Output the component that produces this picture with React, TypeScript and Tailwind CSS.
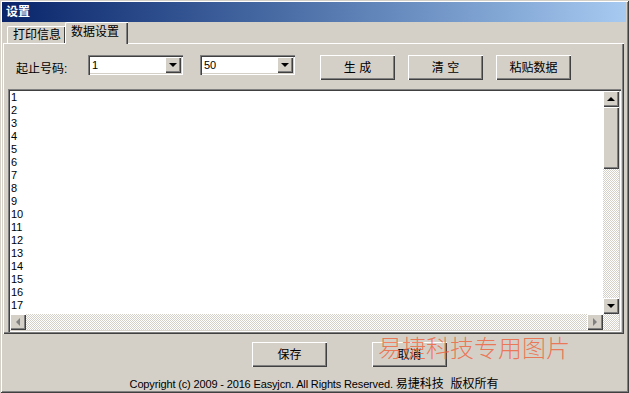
import React from 'react';

const RAISED = 'shadow-[inset_1px_1px_0_#ffffff,inset_-1px_-1px_0_#404040,inset_-2px_-2px_0_#808080]';
const SUNKEN = 'shadow-[inset_1px_1px_0_#808080,inset_2px_2px_0_#404040,inset_-1px_-1px_0_#ffffff,inset_-2px_-2px_0_#d4d0c8]';
const CHECKER = 'bg-[repeating-conic-gradient(#ffffff_0%_25%,#d4d0c8_0%_50%)] bg-size-[2px_2px]';

const LINES = Array.from({ length: 17 }, (_, i) => String(i + 1));

function Arrow({ dir, disabled }: { dir: 'up' | 'down' | 'left' | 'right'; disabled?: boolean }) {
  if (dir === 'up') return <div className={`w-0 h-0 border-x-[4px] border-x-transparent border-b-[4px] ${disabled ? 'border-b-[#808080]' : 'border-b-black'}`} />;
  if (dir === 'down') return <div className={`w-0 h-0 border-x-[4px] border-x-transparent border-t-[4px] ${disabled ? 'border-t-[#808080]' : 'border-t-black'}`} />;
  if (dir === 'left') return <div className={`w-0 h-0 border-y-[4px] border-y-transparent border-r-[4px] ${disabled ? 'border-r-[#808080]' : 'border-r-black'}`} />;
  return <div className={`w-0 h-0 border-y-[4px] border-y-transparent border-l-[4px] ${disabled ? 'border-l-[#808080]' : 'border-l-black'}`} />;
}

function ScrollBtn({ dir, disabled }: { dir: 'up' | 'down' | 'left' | 'right'; disabled?: boolean }) {
  return (
    <div className={`w-[16px] h-[16px] shrink-0 bg-[#d4d0c8] flex items-center justify-center ${RAISED}`}>
      <Arrow dir={dir} disabled={disabled} />
    </div>
  );
}

function Combo({ value }: { value: string }) {
  return (
    <div className={`w-[95px] h-[20px] bg-white flex items-center p-[2px] ${SUNKEN}`}>
      <span className="flex-1 pl-[2px] text-[11px] leading-[16px]">{value}</span>
      <ScrollBtn dir="down" />
    </div>
  );
}

function Button({ children, className = '' }: { children: React.ReactNode; className?: string }) {
  return (
    <div className={`w-[75px] h-[25px] bg-[#d4d0c8] flex items-center justify-center text-[12px] ${RAISED} ${className}`}>
      {children}
    </div>
  );
}

export default function App() {
  return (
    <div className="relative w-[629px] h-[393px] overflow-hidden bg-[#d4d0c8] flex flex-col pt-[2px] pl-[2px] pr-[3px] text-black font-['Liberation_Sans','Noto_Sans_CJK_SC',sans-serif] shadow-[inset_1px_1px_0_#d4d0c8,inset_-1px_-1px_0_#404040,inset_2px_2px_0_#ffffff,inset_-2px_-2px_0_#808080]">
      {/* title bar */}
      <div className="h-[20px] shrink-0 bg-linear-to-r from-[#0a246a] to-[#a6caf0] text-white font-bold text-[12px] pl-[4px] flex items-center">
        设置
      </div>

      {/* tabs */}
      <div className="h-[21px] shrink-0 flex items-end pl-[5px] relative z-10">
        <div className="w-[58px] h-[17px] border-t border-l border-t-white border-l-white shadow-[inset_-1px_0_0_#404040] rounded-tl-[2px] text-[12px] leading-[16px] pl-[5px]">
          打印信息
        </div>
        <div className="w-[63px] h-[22px] -mb-[1px] bg-[#d4d0c8] border-t border-l border-t-white border-l-white shadow-[inset_-1px_0_0_#404040,inset_-2px_0_0_#808080] rounded-tl-[2px] text-[12px] leading-[18px] pl-[5px]">
          数据设置
        </div>
      </div>

      {/* panel */}
      <div className="ml-[1px] w-[621px] h-[291px] shrink-0 flex flex-col pl-[4px] pr-[3px] pb-[2px] pt-[11px] border-t border-l border-t-white border-l-white shadow-[inset_-1px_-1px_0_#404040,inset_-2px_-2px_0_#808080]">
        <div className="h-[34px] flex items-start shrink-0">
          <div className="ml-[8px] w-[72px] mt-[7px] text-[12px] leading-[14px]">起止号码:</div>
          <Combo value="1" />
          <div className="ml-[17px]">
            <Combo value="50" />
          </div>
          <div className="ml-[25px] flex gap-[13px]">
            <Button>生 成</Button>
            <Button>清 空</Button>
            <Button>粘贴数据</Button>
          </div>
        </div>

        {/* text area */}
        <div className={`flex-1 min-h-0 overflow-hidden bg-white p-[2px] flex ${SUNKEN}`}>
          <div className="flex-1 flex flex-col min-w-0 min-h-0">
            <div className="flex-1 min-h-0 overflow-hidden pl-[1px] text-[11px] leading-[13px]">
              {LINES.map(l => (
                <div key={l}>{l}</div>
              ))}
            </div>
            <div className="h-[16px] shrink-0 flex">
              <ScrollBtn dir="left" disabled />
              <div className={`flex-1 ${CHECKER}`} />
              <ScrollBtn dir="right" disabled />
            </div>
          </div>
          <div className="w-[16px] flex flex-col min-h-0">
            <ScrollBtn dir="up" />
            <div className={`h-[62px] shrink-0 bg-[#d4d0c8] ${RAISED}`} />
            <div className={`flex-1 min-h-0 ${CHECKER}`} />
            <ScrollBtn dir="down" />
            <div className={`h-[16px] shrink-0 ${CHECKER}`} />
          </div>
        </div>
      </div>

      {/* footer buttons */}
      <div className="mt-[8px] pl-[250px] flex gap-[45px]">
        <Button>保存</Button>
        <Button>取消</Button>
      </div>

      <div className="mt-[10px] text-center leading-[12px] whitespace-nowrap">
        <span className="text-[11px] tracking-[-0.15px]">Copyright (c) 2009 - 2016 Easyjcn. All Rights Reserved. </span>
        <span className="text-[12px]">易捷科技&nbsp;&nbsp;版权所有</span>
      </div>

      {/* watermark */}
      <div className="absolute left-[378px] top-[333px] text-[24px] leading-[28px] font-light text-[#f0603a]/80 font-['Noto_Sans_CJK_SC',sans-serif] pointer-events-none">
        易捷科技专用图片
      </div>
    </div>
  );
}
